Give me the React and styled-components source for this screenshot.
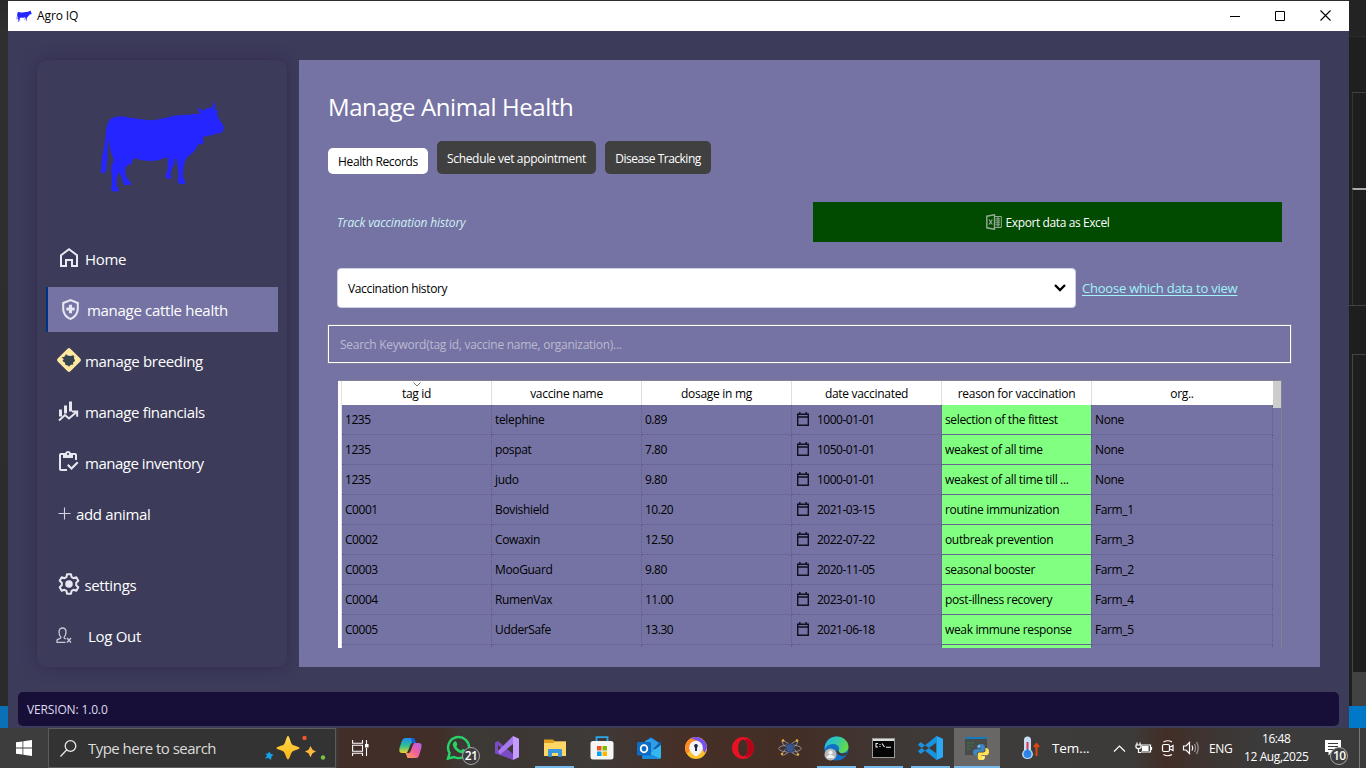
import React from "react";
import styled, { createGlobalStyle } from "styled-components";
import { MdOutlineHealthAndSafety, MdOutlineInventory } from "react-icons/md";

const Global = createGlobalStyle`
  * { box-sizing: border-box; }
  html, body { margin: 0; padding: 0; overflow: hidden; background: #2b2b2b; }
  body { font-family: "Open Sans", "Noto Sans", sans-serif; font-size: 12px; }
  svg { display: block; flex: none; }
`;

const Screen = styled.div`
  width: 1366px; height: 768px; display: flex; flex-direction: column; overflow: hidden;
`;
const Desktop = styled.div`display: flex; height: 728px;`;
const LeftEdge = styled.div`
  width: 8px; background: linear-gradient(#292929, #2f2f2f 30px, #2b2b2b);
  display: flex; flex-direction: column; justify-content: flex-end;
  &::after { content: ""; height: 22px; background: #0a70b8; }
`;
const RightEdge = styled.div`width: 17px; display: flex; flex-direction: column; background: #1e1e1e;`;
const EdgeBlock = styled.div`
  height: ${(p) => p.$h}px; background: ${(p) => p.$bg};
  margin-left: ${(p) => p.$inset || 0}px;
  ${(p) => p.$line && `border-top: ${p.$line};`}
  ${(p) => p.$side && `border-left: ${p.$side};`}
`;
const Window = styled.div`
  width: 1341px; display: flex; flex-direction: column; background: #3c3b5a; border-top: 1px solid #2c2c2c;
`;
const TitleBar = styled.header`
  height: 30px; background: #fff; display: flex; align-items: center; padding: 0 0 1px 8px;
`;
const Text = styled.span`
  font-size: ${(p) => p.$size || 12}px;
  letter-spacing: ${(p) => p.$ls || 0}px;
  color: ${(p) => p.$color || "inherit"};
  white-space: nowrap;
`;
const TitleText = styled(Text)`margin-left: 5px; flex: 1;`;
const Controls = styled.div`display: flex; align-items: center; gap: 35px; margin-right: 18px;`;

const Body = styled.div`display: flex; gap: 12px; padding: 29px 29px 0; height: 636px;`;
const Sidebar = styled.nav`
  width: 250px; height: 607px; border-radius: 10px; background: #3c3b5a;
  box-shadow: 0 0 14px rgba(50, 38, 75, 0.75);
  display: flex; flex-direction: column; padding: 40px 9px 0;
`;
const Logo = styled.div`height: 136px; padding-left: 50px;`;
const NavItem = styled.a`
  height: 45px; margin-bottom: ${(p) => p.$after || 6}px; display: flex; align-items: center;
  padding-left: ${(p) => p.$pad}px; gap: ${(p) => p.$gap}px; color: #fff;
  background: ${(p) => (p.$active ? "#7573a3" : "transparent")};
  border-left: 2px solid ${(p) => (p.$active ? "#003380" : "transparent")};
  svg { margin-bottom: 1px; }
`;
const Main = styled.main`
  width: 1021px; height: 607px; background: #7573a3; padding: 29px 29px 0; display: flex; flex-direction: column;
`;
const Heading = styled.h1`
  margin: 0; height: 52px; line-height: 36px; font-weight: 400; font-size: 24px; color: #fff;
  letter-spacing: ${(p) => p.$ls}px;
`;
const Tabs = styled.div`display: flex; gap: 9px; align-items: flex-end; height: 33px;`;
const Tab = styled.button`
  border: 0; border-radius: 5px; font: 12px "Open Sans", sans-serif; white-space: nowrap; padding: 1px 0 0;
  height: ${(p) => (p.$active ? 26 : 33)}px; width: ${(p) => p.$w}px; letter-spacing: ${(p) => p.$ls}px;
  background: ${(p) => (p.$active ? "#fff" : "#404040")}; color: ${(p) => (p.$active ? "#000" : "#fff")};
`;
const ExportRow = styled.div`
  margin-top: 28px; padding: 0 9px; height: 40px; display: flex; align-items: center; justify-content: space-between;
  em { color: #cdf0f6; }
`;
const ExportButton = styled.button`
  width: 469px; height: 40px; border: 0; background: #004b00; color: #fff; font: inherit;
  display: flex; align-items: center; justify-content: center; gap: 4px;
`;
const SelectRow = styled.div`margin: 26px 0 0 9px; height: 40px; display: flex; align-items: center; gap: 6px;`;
const Select = styled.div`
  width: 739px; height: 40px; background: #fff; border: 1px solid #ced0e4; border-radius: 4px;
  display: flex; align-items: center; justify-content: space-between; padding: 0 9px 0 10px; color: #000;
`;
const Link = styled.a`
  color: #9ff3fa; font-size: 13px; letter-spacing: ${(p) => p.$ls}px; text-decoration: underline;
  text-underline-offset: 2px; text-decoration-thickness: 1px; white-space: nowrap;
`;
const Search = styled.div`
  margin-top: 17px; height: 38px; width: 963px; border: 1px solid #fff; outline: 0.5px solid #82829a;
  display: flex; align-items: center; padding: 1px 0 0 11px; color: #bbb9d2;
`;
const Table = styled.div`
  margin: 17px 0 0 10px; width: 944px; height: 268px; overflow: hidden; display: flex;
  border-top: 1px solid #83838f; border-right: 1px solid #83838f;
`;
const Gutter = styled.div`width: 4px; background: #fff; border-right: 1px solid #e2e2e2;`;
const Columns = styled.div`display: grid; grid-template-columns: repeat(5, 150px) 181px; grid-auto-rows: 30px; grid-template-rows: 24px; align-content: start;`;
const HeadCell = styled.div`
  background: #fff; color: #000; border-right: 1px solid ${(p) => (p.$last ? "#fff" : "#e0e0e0")};
  display: flex; flex-direction: column; align-items: center; justify-content: center; position: relative;
  padding-top: 1px;
  svg { position: absolute; top: 1px; }
`;
const Cell = styled.div`
  color: #000; padding: 0 3px; display: flex; align-items: center; gap: 8px;
  border-right: 1px dotted #625c8c; border-bottom: 1px dotted #625c8c;
  svg { margin: 0 0 1px 2px; }
  ${(p) => p.$green && "background: #80ff80; background-clip: padding-box; border-bottom: 1px solid #6a6199;"}
`;
const ScrollTrack = styled.div`
  width: 8px;
  &::before { content: ""; display: block; height: 27px; background: #cdcdcd; }
`;
const Footer = styled.footer`
  margin: 25px 10px 0; height: 34px; border-radius: 5px; background: #180f38; color: #dedbee;
  display: flex; align-items: center; padding-left: 9px;
`;

const Taskbar = styled.div`
  height: 40px; display: flex; align-items: stretch; color: #fff;
  background: linear-gradient(90deg, #3d3d3d 0, #3d3d3d 335px, #422e28 340px, #422e28 440px, #3c3a37 465px, #3d3733 520px, #3e3b39 590px,
    #452f27 680px, #432e26 800px, #3f3936 900px, #3d3c3b 1020px, #3c3b3a 1130px, #422e27 1165px, #3e3531 1210px, #3b3b3b 1260px, #3b3b3b 100%);
`;
const Start = styled.div`width: 48px; display: flex; align-items: center; justify-content: center;`;
const SearchBox = styled.div`
  width: 288px; border: 1px solid #5c5c5c; background: #333; display: flex; align-items: center; padding-left: 11px;
  color: #dcdcdc;
`;
const SearchText = styled(Text)`margin-left: 11px; flex: 1;`;
const TaskItem = styled.div`
  width: ${(p) => p.$w || 47}px; display: flex; align-items: center; justify-content: center; position: relative;
  background: ${(p) => (p.$active ? "#696766" : "transparent")};
  ${(p) => p.$open && `&::after { content: ""; position: absolute; left: ${p.$active ? 0 : 4}px; right: ${p.$active ? 0 : 4}px; bottom: 0; height: 2px; background: #76b9ed; }`}
`;
const Badge = styled.span`
  position: absolute; right: ${(p) => p.$r}px; bottom: ${(p) => p.$b}px; width: 18px; height: 18px; border-radius: 9px;
  border: 1px solid #a5a5a5; background: #3d3d3d; color: #fff; font-size: 12px; font-weight: 600; line-height: 15px; text-align: center;
  letter-spacing: -0.6px;
`;
const Weather = styled.div`display: flex; align-items: center; gap: 12px; margin-left: 22px; width: 91px;`;
const Tray = styled.div`display: flex; align-items: center; height: 40px;`;
const Clock = styled.div`
  display: flex; flex-direction: column; align-items: center; width: 76px; margin-left: 6px; line-height: 18px;
`;
const Notify = styled.div`width: 45px; display: flex; align-items: center; padding-left: 11px; position: relative;`;
const ShowDesktop = styled.div`width: 5px; border-left: 1px solid #777;`;

const Cow = ({ width, height }) => (
  <svg width={width} height={height} viewBox="288 301.5 390 282" preserveAspectRatio="none">
    <path fill="#2525ff" d="M330 360C340 350 360 350 375 352C400 358 430 361 455 362C480 360 500 354 527 348C550 347 575 346 580 343L598 344C600 336 594 332 592 325C598 326 602 330 606 333C612 330 618 327 628 326C638 324 641 315 641 306C647 312 647 322 642 330L652 331C653 340 650 343 654 352C658 364 668 373 671 380C672 388 670 394 665 398C658 403 652 400 645 404C635 408 620 408 611 412L609 418L611 430C605 437 598 435 595 433C592 445 585 455 575 462C565 470 556 478 554 486C552 500 548 515 549 530C550 540 556 542 557 551C550 555 542 554 537 552C532 545 533 540 535 530C536 515 532 500 530 478L524 478V492C518 500 515 510 512 520C511 528 516 532 515 537H500C495 534 495 528 500 520C506 505 502 490 503 475C495 473 485 479 470 483C450 486 430 484 415 480C408 474 402 476 397 483L393 497L388 492L381 503L376 497C376 510 375 525 380 535C385 543 395 548 393 556L374 557C368 552 369 545 367 540C365 530 360 524 357 518C352 525 349 540 350 555C350 565 357 568 358 575L337 576C332 573 333 566 335 560C337 545 335 520 333 505C334 495 341 490 341 480C335 465 330 450 325 418C322 435 324 455 322 475C320 490 321 505 317 519L305 521C301 518 302 514 304 508C303 490 306 470 310 455C316 430 316 410 318 395C319 380 324 368 330 360Z" />
  </svg>
);
const HomeIcon = () => (
  <svg width="18" height="20" viewBox="0 0 18 20" fill="none" stroke="#e9eaf2" strokeWidth="2">
    <path d="M1 7.2 9 1.3 17 7.2V18H12V12H6V18H1Z" />
    <path strokeWidth="1.4" d="M9 13V19" stroke="none" />
  </svg>
);
const BreedingIcon = () => (
  <svg width="26" height="26" viewBox="0 0 26 26">
    <rect x="4" y="4" width="18" height="18" rx="2" fill="#ffe9a0" transform="rotate(45 13 13)" />
    <path fill="#35434e" d="M5.500 10.500 8.300 9.800 9.500 8.300 10 7 11.500 8.500 14.500 9 17 8.300 18.500 9.500 17.800 10.800 19 13.500 18.300 14.800 17 15.500 17.300 17.500 15 17.800 12.800 19.800 12 18.500 9.500 18 8.800 15.500 6.500 14 7.800 12Z" />
  </svg>
);
const FinanceIcon = () => (
  <svg width="21" height="21" viewBox="0 0 21 21" fill="none" stroke="#e6e7f0">
    <path strokeWidth="3" d="M2.500 8.500V15.500M7.500 4.500V12.500M12.500 .5V10.500" />
    <path strokeWidth="2" d="M1 19.500 7 14 11 17.500 18 11.500M14 10.500H19.200V15.800" />
  </svg>
);
const PlusIcon = () => (
  <svg width="13" height="13" viewBox="0 0 13 13" stroke="#d4d4df" strokeWidth="1.1"><path d="M6.5.5V12.5M.5 6.5H12.5" /></svg>
);
const GearIcon = () => (
  <svg width="22" height="22" viewBox="0 0 22 22" fill="none" stroke="#e6e7f0" strokeWidth="2" strokeLinejoin="round">
    <path d="M9 1.3H13L13.6 4.1 15.6 5.2 18.3 4.3 20.3 7.8 18.2 9.8V12.2L20.3 14.2 18.3 17.7 15.6 16.8 13.6 17.9 13 20.7H9L8.4 17.9 6.4 16.8 3.7 17.7 1.7 14.2 3.8 12.2V9.8L1.7 7.8 3.7 4.3 6.4 5.2 8.4 4.1Z" />
    <circle cx="11" cy="11" r="3.8" fill="#e6e7f0" stroke="none" />
  </svg>
);
const LogoutIcon = () => (
  <svg width="16" height="17" viewBox="0 0 16 17" fill="none" stroke="#c9c9d6" strokeWidth="1.3">
    <path d="M9.500 15.300H1V13C2.500 11.800 5 11.800 5 10.500C3.500 9 3 7 3 5C3 2.300 4.500 1 6.500 1S10 2.300 10 5C10 7 9.300 9 8 10.500C8 11.200 9 11.700 10 12" />
    <path d="M11 11 15 15.500M15 11 11 15.500" />
  </svg>
);
const ExcelIcon = () => (
  <svg width="16" height="16" viewBox="0 0 16 16" fill="none" stroke="#93ab93" strokeWidth="1">
    <path strokeWidth="1.400" d="M.8 2.2 8.5.7V15.3L.8 13.8Z" />
    <path d="M8.500 2.500H15.300V13.500H8.500M9.500 4.800H14M9.500 6.800H14M9.500 8.800H14M9.500 10.800H14M12 3V13" />
    <path strokeWidth="1.2" d="M3 5.5 6.3 10.5M6.3 5.5 3 10.5" />
  </svg>
);
const CalendarIcon = () => (
  <svg width="12" height="14" viewBox="0 0 12 14" fill="none" stroke="#10101f" strokeWidth="1.4">
    <path d="M.7 2.300H11.300V13.200H.7ZM.7 5H11.300M2.800 0V2.500M9.200 0V2.500" />
  </svg>
);
const Sparkles = () => (
  <svg width="62" height="26" viewBox="0 0 62 26">
    <defs><linearGradient id="gold" x1="0" y1="0" x2="0" y2="1"><stop offset="0" stopColor="#ffd84a" /><stop offset="1" stopColor="#f7b516" /></linearGradient></defs>
    <path fill="url(#gold)" d="M24 1C25.5 1 26.5 7.5 28 9.5 30 11 35.5 11.5 35.5 13S30 15 28 17C26.5 19 25.5 24.5 24 24.5S21.5 19 20 17C18 15 12.5 14.500 12.500 13S18 11 20 9.500C21.500 7.500 22.500 1 24 1Z" />
    <path fill="#fcb93a" d="M46.500 11 48.500 14.800 52 16.500 48.500 18.300 46.500 22.300 44.500 18.300 41 16.500 44.500 14.800Z" />
    <path fill="#17a2ec" d="M5 16.500 7 19 9.500 19.500 7.500 21.500 7 25 4.500 23 1 23.500 3 20.800 1.500 18.500 4 18.800Z" />
    <circle cx="40.500" cy="3" r="2.200" fill="#f0582a" /><circle cx="59" cy="22.500" r="2.200" fill="#7cc142" />
  </svg>
);
const TaskView = () => (
  <svg width="17" height="16" viewBox="0 0 17 16" fill="none" stroke="#fff" strokeWidth="1.1">
    <path d="M.6 0V3.200H10.500V0M.6 5.300H10.500V11.200H.6ZM.6 16V13.300H10.500V16M14.500 0V4M14.500 8V16" /><path fill="#fff" d="M13.500 4.500H16V7H13.500Z" />
  </svg>
);
const Copilot = () => (
  <svg width="23" height="22" viewBox="0 0 23 22">
    <defs>
      <linearGradient id="cpa" x1="0" y1="0" x2="0" y2="1"><stop offset="0" stopColor="#1b8df0" /><stop offset=".55" stopColor="#35c28a" /><stop offset="1" stopColor="#f4d028" /></linearGradient>
      <linearGradient id="cpb" x1="1" y1="0" x2="0" y2="1"><stop offset="0" stopColor="#b35cf2" /><stop offset=".5" stopColor="#f0609c" /><stop offset="1" stopColor="#ffa552" /></linearGradient>
    </defs>
    <path fill="url(#cpa)" d="M6 1H14.500L16.500 6H13C11 6 9.500 15 7.500 16H3C0 16 0 13 .8 10L3 3.500Q4 1 6 1Z" />
    <path fill="url(#cpb)" d="M17 21H8.500L6.500 16H10C12 16 13.500 6.500 15.500 6H20C23 6 23 9 22 12L20 18.500Q19 21 17 21Z" />
    <path fill="#1560d6" d="M12 1H14.500Q16 1.500 17 6H13Z" />
  </svg>
);
const WhatsApp = () => (
  <svg width="26" height="26" viewBox="0 0 26 26" fill="none">
    <path stroke="#25d366" strokeWidth="2.400" d="M2 23.500 3.600 18A10.500 10.500 0 1 1 8 22Z" />
    <path fill="#25d366" d="M8.500 6.500C9.500 6 10.300 6.500 10.600 7.500L11.300 9.200C11.500 10 10.500 10.800 10.300 11.300C11.300 13.300 13 14.800 15 15.600L16.600 14C17 13.700 19 14.500 19.600 15.200C20 17.500 17.500 18.800 15.500 18.300C11.500 17.500 7.500 13.500 6.800 10C6.700 8.500 7.500 7 8.500 6.500Z" />
  </svg>
);
const VisualStudio = () => (
  <svg width="24" height="24" viewBox="0 0 24 24">
    <path fill="#7a4bc4" d="M0 6.500 3 5 18 18V24L3.500 18.500 0 17.500ZM3 9V15L6.200 12Z" fillRule="evenodd" />
    <path fill="#a678ee" d="M18 0 3 15 5 18.500 18 8Z" /><path fill="#c49cff" d="M18 0 24 2.800V21.200L18 24Z" />
  </svg>
);
const Explorer = () => (
  <svg width="22" height="20" viewBox="0 0 22 20">
    <path fill="#e0a01c" d="M0 1.500H9L11 3.500H22V8H0Z" /><path fill="#ffd766" d="M0 5H9L11 3.500H22V18H0Z" />
    <path fill="#3a96dd" d="M4 18V12Q4 11 5 11H17Q18 11 18 12V18.800H14V15H8V18.800H4Z" />
  </svg>
);
const Store = () => (
  <svg width="24" height="24" viewBox="0 0 24 24">
    <path fill="none" stroke="#2aa9e8" strokeWidth="1.800" d="M6.500 6V1.200H17.500V6" /><rect x=".5" y="5" width="23" height="18.500" rx="2.500" fill="#f5f5f5" />
    <path fill="#f25022" d="M7 10H11.500V14.500H7Z" /><path fill="#7fba00" d="M12.500 10H17V14.500H12.500Z" />
    <path fill="#00a4ef" d="M7 15.500H11.500V20H7Z" /><path fill="#ffb900" d="M12.500 15.500H17V20H12.500Z" />
  </svg>
);
const Outlook = () => (
  <svg width="24" height="23" viewBox="0 0 24 23">
    <path fill="#1066b5" d="M5 7 14 0 24 7V18H5Z" /><path fill="#2f9de8" d="M8 4 14 1 22 6V12L14 15 8 12Z" />
    <path fill="#0f5cab" d="M16 12 24 4V12Z" /><path fill="#35b8f1" d="M5 22 24 8V20Q24 22 22 22Z" /><path fill="#1a8de0" d="M5 13 24 22H7Q5 22 5 20Z" />
    <rect y="5" width="14" height="13.500" rx="1" fill="#0f6cc4" /><ellipse cx="7" cy="11.700" rx="3.300" ry="3.600" fill="none" stroke="#fff" strokeWidth="1.800" />
  </svg>
);
const SecureBrowser = () => (
  <svg width="24" height="24" viewBox="0 0 24 24">
    <circle cx="12" cy="12" r="11" fill="#fbc02b" />
    <path fill="#7650f0" d="M6 3A11 11 0 0 1 23 12L20.500 17 18 12 14 5Z" />
    <path fill="#ff8a25" d="M7 2.300 14 5 7 8 6.500 14 3 18A11 11 0 0 1 7 2.300Z" />
    <circle cx="12" cy="11.500" r="6.800" fill="#f2f3f9" />
    <path fill="#f2f3f9" d="M5.500 12H18.500Q18 17 12 20.500 6 17 5.500 12Z" />
    <path fill="#222742" d="M12 8A1.900 1.900 0 0 1 13 11.500V15H11V11.500A1.900 1.900 0 0 1 12 8Z" />
  </svg>
);
const Opera = () => (
  <svg width="24" height="24" viewBox="0 0 24 24"><path fill="#e81224" fillRule="evenodd" d="M12 1A11 11 0 1 0 12 23A11 11 0 1 0 12 1ZM12 3.800C15 3.800 16.800 7.500 16.800 12S15 20.200 12 20.200 7.200 16.500 7.200 12 9 3.800 12 3.800Z" /><path fill="#a70014" opacity=".75" d="M14 3.500C17 1.500 23 6 23 12S17 22.500 14 20.500C16.500 17 17 15 17 12S16.500 7 14 3.500Z" /></svg>
);
const Atom = () => (
  <svg width="24" height="20" viewBox="0 0 24 20" fill="none" stroke="#8e96a8" strokeWidth=".9">
    <ellipse cx="12" cy="10.500" rx="11.300" ry="3.600" /><ellipse cx="12" cy="10" rx="10.500" ry="2.300" transform="rotate(42 12 10)" /><ellipse cx="12" cy="10" rx="10.500" ry="2.300" transform="rotate(-42 12 10)" />
    <circle cx="12" cy="10" r="4.300" fill="#3a568c" stroke="#283b63" /><g fill="#e9b33c" stroke="none"><circle cx="5" cy="2.500" r="1.300" /><circle cx="19" cy="2.500" r="1.300" /><circle cx="4" cy="16" r="1.200" /><circle cx="20" cy="16.500" r="1.200" /></g>
  </svg>
);
const Edge = () => (
  <svg width="25" height="25" viewBox="0 0 25 25">
    <defs><linearGradient id="edg" x1="0" y1="0" x2="1" y2=".4"><stop offset="0" stopColor="#27b5e8" /><stop offset=".5" stopColor="#2fc7b0" /><stop offset="1" stopColor="#62d84e" /></linearGradient></defs>
    <circle cx="12.500" cy="12.500" r="12" fill="#1170c8" /><path fill="url(#edg)" d="M.7 11C2 4 7 .5 12.500 .5 19.500 .5 24.500 5.500 24.500 10.500 24.500 15 21 17 17.500 17 14.500 17 14 15.800 14.800 14.500 16.500 11 13 8 9.500 8 5 8 2 10 .7 14Z" />
    <path fill="#433733" d="M14.500 15C15 17.500 19 18.500 23.800 16.500Q22.500 19.500 19.500 20 12.500 20 12.500 14Z" /><circle cx="6.500" cy="18.500" r="6" fill="#b9b9b9" /><circle cx="6.500" cy="16.600" r="2.100" fill="#f4f4f4" /><path fill="#f4f4f4" d="M2.800 22Q3 19 6.500 19T10.200 22Z" />
  </svg>
);
const Terminal = () => (
  <svg width="23" height="20" viewBox="0 0 23 20"><rect x=".5" y=".5" width="22" height="19" fill="#050505" stroke="#9a9a9a" /><path fill="#dadada" d="M1 1H22V3H1Z" /><path fill="none" stroke="#eee" strokeWidth="1.100" d="M6 5.500H4V9H6M8 6V7M8 8V9M10 5.500 12.500 9M14 9.200H19" /></svg>
);
const VsCode = () => (
  <svg width="25" height="24" viewBox="0 0 25 24"><path fill="#0e7fc8" d="M18.500 0 25 3V21L18.500 24Z" /><path fill="#1893e0" d="M18.500 0 0 15 2.500 18 18.500 6.500ZM0 9 2.500 6 18.500 17.500V24Z" /><path fill="#2aa9f5" d="M18.500 0 25 3V21L18.500 24Z" /></svg>
);
const PythonApp = () => (
  <svg width="24" height="24" viewBox="0 0 24 24">
    <path fill="#474b49" d="M0 1H22V19H0Z" /><path fill="#1779be" d="M0 1H22V3H0Z" /><path stroke="#3f7a46" strokeDasharray="3 1" d="M2 7H9M2 10H8M2 13H6" />
    <path fill="#3f87c4" d="M16 8Q12 8 12 10.500V12.500H16.500V13.300H10.500Q8 13.300 8 16.300T10.500 19.300H12V17.500Q12 15.800 14 15.800H17.500Q19.800 15.800 19.800 13.500V10.500Q19.800 8 16 8Z" />
    <path fill="#ffdf55" d="M16 24.300Q12.800 24.300 12.800 21.800V18Q12.800 16.600 14.500 16.600H18Q20.500 16.500 20.500 13.800V12H21.500Q24 12.500 24 15.800T21.500 19.300H16.500V20H20V21.800Q20 24.300 16 24.300Z" />
    <circle cx="14" cy="10.200" r=".8" fill="#fff" /><circle cx="18" cy="22" r=".8" fill="#fff" />
  </svg>
);
const Thermometer = () => (
  <svg width="18" height="24" viewBox="0 0 18 24"><path fill="#c7def5" d="M2 4Q2 .5 5.500 .5T9 4V14Q11 16 11 18.500 10 23 5.500 23T0 18.500Q0 16 2 14Z" /><circle cx="5.500" cy="18" r="4" fill="#2e86e8" /><path stroke="#e0344c" strokeWidth="2" d="M5.500 6V13" /><path stroke="#2e78e0" strokeWidth="2" d="M5.500 13V18" /><path stroke="#e0480f" strokeWidth="2" fill="none" d="M14.500 20V8.500M12 11 14.500 8 17 11" /></svg>
);
const TrayIcons = () => (
  <svg width="86" height="20" viewBox="0 0 86 20" fill="none" stroke="#fff" strokeWidth="1.200">
    <path d="M1 13.500 6.500 8 12 13.500" />
    <path d="M26.500 7H37.500V14H28M38.500 9V12M24 4.500V7M27 4.500V7M23 7H28V9.500Q25.500 12 23 9.500ZM25.500 11V14.500H28" /><path fill="#fff" d="M29.500 8.500H35V12.500H29.500Z" />
    <rect x="49.500" y="6.500" width="7" height="7" rx="1.500" /><path d="M57 9 60 7.500V12.500L57 11M50.500 4Q55 1.500 59 4M50.500 16.500Q55 19 59 16.500" />
    <path d="M70.500 8H73L76.500 4.500V15.500L73 12H70.500ZM79 7.500Q80.500 10 79 12.500" /><path stroke="#999" d="M81.500 6Q83.500 10 81.500 14M83.500 4Q87 10 83.500 16" />
  </svg>
);

const nav = [
  { label: "Home", icon: <HomeIcon />, pad: 11.5, gap: 7.5, ls: -0.3 },
  { label: "manage cattle health", icon: <MdOutlineHealthAndSafety size={25} color="#e6e7f0" />, pad: 10, gap: 4, ls: -0.3, active: true },
  { label: "manage breeding", icon: <BreedingIcon />, pad: 7.5, gap: 3.5, ls: -0.32 },
  { label: "manage financials", icon: <FinanceIcon />, pad: 10, gap: 6, ls: -0.36 },
  { label: "manage inventory", icon: <MdOutlineInventory size={24} color="#e6e7f0" />, pad: 8, gap: 5, ls: -0.48 },
  { label: "add animal", icon: <PlusIcon />, pad: 9.5, gap: 5.5, ls: -0.35, after: 26 },
  { label: "settings", icon: <GearIcon />, pad: 9.5, gap: 5, ls: -0.35 },
  { label: "Log Out", icon: <LogoutIcon />, pad: 8, gap: 16, ls: -0.3 },
];
const heads = ["tag id", "vaccine name", "dosage in mg", "date vaccinated", "reason for vaccination", "org.."];
const spacing = [-0.45, -0.35, -0.5, -0.5, -0.35, -0.4];
const rows = [
  ["1235", "telephine", "0.89", "1000-01-01", "selection of the fittest", "None"],
  ["1235", "pospat", "7.80", "1050-01-01", "weakest of all time", "None"],
  ["1235", "judo", "9.80", "1000-01-01", "weakest of all time till ...", "None"],
  ["C0001", "Bovishield", "10.20", "2021-03-15", "routine immunization", "Farm_1"],
  ["C0002", "Cowaxin", "12.50", "2022-07-22", "outbreak prevention", "Farm_3"],
  ["C0003", "MooGuard", "9.80", "2020-11-05", "seasonal booster", "Farm_2"],
  ["C0004", "RumenVax", "11.00", "2023-01-10", "post-illness recovery", "Farm_4"],
  ["C0005", "UdderSafe", "13.30", "2021-06-18", "weak immune response", "Farm_5"],
  ["", "", "", "", "", ""],
];

export default function App() {
  return (
    <Screen>
      <Global />
      <Desktop>
        <LeftEdge />
        <Window>
          <TitleBar>
            <Cow width={16} height={12} />
            <TitleText $ls={-0.1}>Agro IQ</TitleText>
            <Controls>
              <svg width="10" height="10" stroke="#000"><path d="M0 5.500H10" /></svg>
              <svg width="10" height="10" stroke="#000" fill="none"><path d="M.5.5H9.500V9.500H.5Z" /></svg>
              <svg width="11" height="11" stroke="#000" strokeWidth="1.100"><path d="M.5.5 10.500 10.500M10.500.5.5 10.500" /></svg>
            </Controls>
          </TitleBar>
          <Body>
            <Sidebar>
              <Logo><Cow width={130} height={94} /></Logo>
              {nav.map((n) => (
                <NavItem key={n.label} $pad={n.pad} $gap={n.gap} $active={n.active} $after={n.after}>
                  {n.icon}
                  <Text $size={15} $ls={n.ls}>{n.label}</Text>
                </NavItem>
              ))}
            </Sidebar>
            <Main>
              <Heading $ls={-0.4}>Manage Animal Health</Heading>
              <Tabs>
                <Tab $active $w={100} $ls={-0.38}>Health Records</Tab>
                <Tab $w={159} $ls={-0.33}>Schedule vet appointment</Tab>
                <Tab $w={106} $ls={-0.5}>Disease Tracking</Tab>
              </Tabs>
              <ExportRow>
                <Text as="em" $ls={-0.13}>Track vaccination history</Text>
                <ExportButton><ExcelIcon /><Text $ls={-0.4}>Export data as Excel</Text></ExportButton>
              </ExportRow>
              <SelectRow>
                <Select>
                  <Text $ls={-0.35}>Vaccination history</Text>
                  <svg width="12" height="8" viewBox="0 0 12 8" fill="none" stroke="#000" strokeWidth="2.300"><path d="M1 1 6 6 11 1" /></svg>
                </Select>
                <Link $ls={-0.22}>Choose which data to view</Link>
              </SelectRow>
              <Search><Text $ls={-0.27}>Search Keyword(tag id, vaccine name, organization)...</Text></Search>
              <Table>
                <Gutter />
                <Columns>
                  {heads.map((h, i) => (
                    <HeadCell key={h} $last={i === 5}>
                      {i === 0 && <svg width="8" height="5" fill="none" stroke="#777"><path d="M.5.5 4 4 7.500.5" /></svg>}
                      <Text $ls={-0.3}>{h}</Text>
                    </HeadCell>
                  ))}
                  {rows.map((r, ri) => r.map((c, i) => (
                    <Cell key={`${ri}-${i}`} $green={i === 4}>
                      {i === 3 && c && <CalendarIcon />}
                      <Text $ls={spacing[i]}>{c}</Text>
                    </Cell>
                  )))}
                </Columns>
                <ScrollTrack />
              </Table>
            </Main>
          </Body>
          <Footer><Text $ls={-0.15}>VERSION: 1.0.0</Text></Footer>
        </Window>
        <RightEdge>
          <EdgeBlock $h={36} $bg="#232323" />
          <EdgeBlock $h={56} $bg="#1f1f1f" $line="1px solid #2c2c2c" />
          <EdgeBlock $h={96} $bg="#1e1e1e" $inset={3} $line="1px solid #444" $side="1px solid #333" />
          <EdgeBlock $h={117} $bg="#1e1e1e" $inset={3} $line="2px solid #aaa" $side="1px solid #333" />
          <EdgeBlock $h={49} $bg="#1e1e1e" $line="1px solid #444" />
          <EdgeBlock $h={318} $bg="#1e1e1e" $inset={3} $line="1px solid #444" $side="1px solid #444" />
          <EdgeBlock $h={34} $bg="#424242" $inset={3} />
          <EdgeBlock $h={22} $bg="#0078c8" />
        </RightEdge>
      </Desktop>
      <Taskbar>
        <Start><svg width="16" height="16" viewBox="0 0 16 16" fill="#fff"><path d="M0 2.300 6.500 1.400V7.500H0ZM7.300 1.300 16 0V7.500H7.300ZM0 8.400H6.500V14.600L0 13.700ZM7.300 8.400H16V16L7.300 14.700Z" /></svg></Start>
        <SearchBox>
          <svg width="17" height="17" viewBox="0 0 17 17" fill="none" stroke="#e8e8e8" strokeWidth="1.300"><circle cx="10.500" cy="6" r="5.300" /><path d="M6.800 9.800.5 16.500" /></svg>
          <SearchText $size={15} $ls={-0.53}>Type here to search</SearchText>
          <Sparkles /><svg width="9" height="1" />
        </SearchBox>
        <TaskItem $w={49}><TaskView /></TaskItem>
        <TaskItem $w={50}><Copilot /></TaskItem>
        <TaskItem><WhatsApp /><Badge $r={2} $b={3}>21</Badge></TaskItem>
        <TaskItem $w={49}><VisualStudio /></TaskItem>
        <TaskItem $open><Explorer /></TaskItem>
        <TaskItem><Store /></TaskItem>
        <TaskItem $w={48}><Outlook /></TaskItem>
        <TaskItem $w={46}><SecureBrowser /></TaskItem>
        <TaskItem><Opera /></TaskItem>
        <TaskItem><Atom /></TaskItem>
        <TaskItem $open><Edge /></TaskItem>
        <TaskItem $open><Terminal /></TaskItem>
        <TaskItem $open><VsCode /></TaskItem>
        <TaskItem $w={46} $open $active><PythonApp /></TaskItem>
        <Weather><Thermometer /><Text $size={13.5} $ls={-0.1}>Tem...</Text></Weather>
        <Tray>
          <TrayIcons />
          <svg width="10" height="1" />
          <Text $ls={-0.4}>ENG</Text>
          <Clock><Text $ls={-0.4}>16:48</Text><Text $ls={-0.4}>12 Aug,2025</Text></Clock>
        </Tray>
        <Notify>
          <svg width="16" height="16" viewBox="0 0 16 16"><path fill="#fff" d="M0 0H16V12H7L3.500 15.500V12H0Z" /><path stroke="#3b3b3b" d="M3 3.500H13M3 6.500H13M3 9.500H9" /></svg>
          <Badge $r={11} $b={3}>10</Badge>
        </Notify>
        <ShowDesktop />
      </Taskbar>
    </Screen>
  );
}
